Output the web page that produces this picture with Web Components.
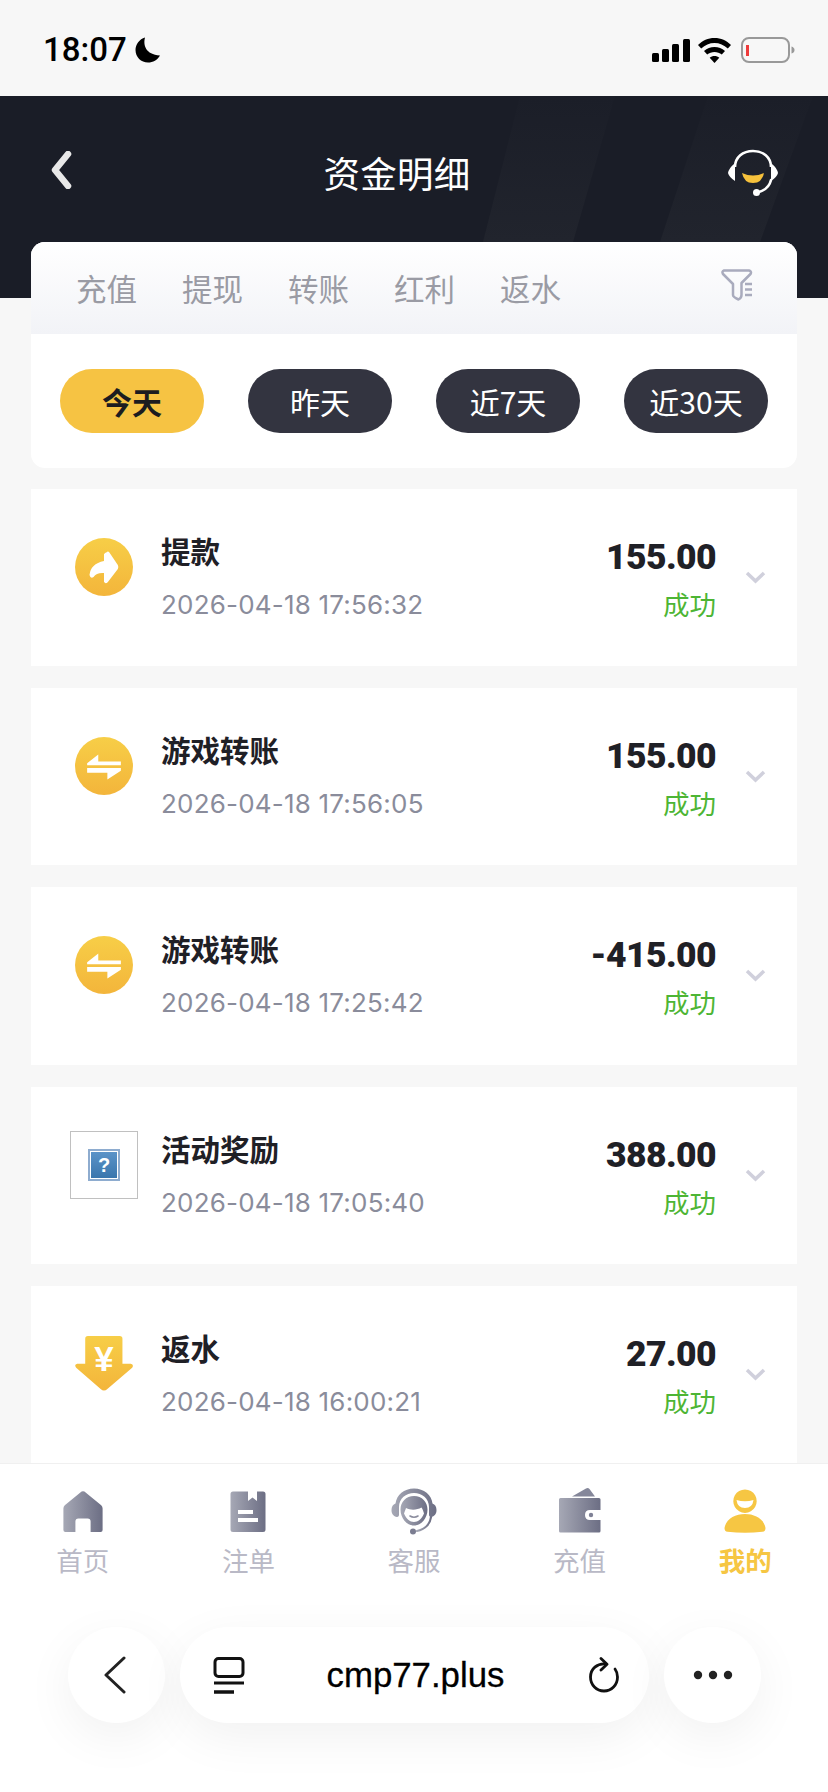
<!DOCTYPE html>
<html lang="zh-CN">
<head>
<meta charset="utf-8">
<title>资金明细</title>
<style>
    html, body {
        margin: 0;
        padding: 0;
        background: #f7f7f7;
    }
    body {
        width: 828px;
        height: 1792px;
        overflow: hidden;
        display: flex;
        flex-direction: column;
        font-family: "Noto Sans CJK SC", "Noto Sans", sans-serif;
    }
    .list {
        flex: 1;
        min-height: 0;
        overflow: hidden;
        display: flex;
        flex-direction: column;
        gap: 22px;
        padding: 20.67px 31px 0;
    }
</style>
</head>
<body>
    <ui-status-bar></ui-status-bar>
    <ui-page-header title="资金明细"></ui-page-header>
    <ui-filter-card>
        <ui-chip active>今天</ui-chip>
        <ui-chip>昨天</ui-chip>
        <ui-chip>近7天</ui-chip>
        <ui-chip>近30天</ui-chip>
    </ui-filter-card>
    <div class="list">
        <ui-record icon="withdraw" name="提款" time="2026-04-18 17:56:32" amount="155.00"></ui-record>
        <ui-record icon="transfer" name="游戏转账" time="2026-04-18 17:56:05" amount="155.00"></ui-record>
        <ui-record icon="transfer" name="游戏转账" time="2026-04-18 17:25:42" amount="-415.00"></ui-record>
        <ui-record icon="missing" name="活动奖励" time="2026-04-18 17:05:40" amount="388.00"></ui-record>
        <ui-record icon="rebate" name="返水" time="2026-04-18 16:00:21" amount="27.00"></ui-record>
    </div>
    <ui-bottom-area>
        <ui-nav-item icon="home">首页</ui-nav-item>
        <ui-nav-item icon="orders">注单</ui-nav-item>
        <ui-nav-item icon="service">客服</ui-nav-item>
        <ui-nav-item icon="wallet">充值</ui-nav-item>
        <ui-nav-item icon="me" active>我的</ui-nav-item>
    </ui-bottom-area>

<script>
(() => {

    const grayFill = `<defs><linearGradient id="g" x1="0" x2="1" y1="0" y2="0"><stop offset="0" stop-color="#a6a8b5"/><stop offset="1" stop-color="#6c6e84"/></linearGradient></defs>`;
    const yellowFill = `<defs><linearGradient id="y" x1="0" x2="0" y1="0" y2="1"><stop offset="0" stop-color="#f7ce47"/><stop offset="1" stop-color="#f3b53b"/></linearGradient></defs>`;

    const navIcons = {
        home: `<svg width="40" height="42" viewBox="0 0 40 42" style="margin-top:1px">${grayFill}
            <path fill="url(#g)" d="M18.6 .6Q20 -.2 21.4 .6L38.2 14.2Q39.6 15.4 39.6 17.4V39Q39.6 41 37.6 41H27.6V30.5Q27.6 27.5 24.6 27.5H15.4Q12.4 27.5 12.4 30.5V41H2.4Q.4 41 .4 39V17.4Q.4 15.4 1.8 14.2Z"/></svg>`,
        orders: `<svg width="36" height="42" viewBox="0 0 36 42" style="margin-top:1px">${grayFill}
            <path fill="url(#g)" fill-rule="evenodd" d="M3 .5H18V10L22.5 6.5L27 10V.5H33Q35.5 .5 35.5 3V38.5Q35.5 41 33 41H3Q.5 41 .5 38.5V3Q.5 .5 3 .5ZM8 19V23H23V19ZM8 27V31H28V27Z"/></svg>`,
        service: `<svg width="46" height="47" viewBox="0 0 46 47">${grayFill}
            <path fill="url(#g)" d="M23 .5C33 .5 40.5 7 41.5 15.5C44 16.5 45.5 18.5 45.5 22C45.5 26 43.5 28.5 40 29C38.5 29 38 28 38 26.5V19C38 10.5 31 5 23 5C15 5 8 10.5 8 19V26.5C8 28 7.5 29 6 29C2.5 28.5 .5 26 .5 22C.5 18.5 2 16.5 4.5 15.5C5.5 7 13 .5 23 .5Z"/>
            <path fill="url(#g)" fill-rule="evenodd" d="M23 8C31 8 36.5 14 36.5 21.5C36.5 30 30.5 37.5 23 37.5C15.5 37.5 9.5 30 9.5 21.5C9.5 14 15 8 23 8ZM15 20C14 23 13.5 24 13 25.5C15 30.5 19 34 23 34C27 34 31 30.5 33 25.5C32.5 23.5 31.5 21 30.5 19.5C26 22 20 22.5 15 20Z"/>
            <path fill="none" stroke="#8b8d9e" stroke-width="1.6" stroke-linecap="round" d="M19 28Q23 30.5 27 28"/>
            <path fill="none" stroke="url(#g)" stroke-width="2.2" stroke-linecap="round" d="M40 29C39 36 34 41.5 26 43"/>
            <circle cx="22" cy="43.5" r="3" fill="#7b7d91"/></svg>`,
        wallet: `<svg width="42" height="46" viewBox="0 0 42 46" style="margin-top:-2px">${grayFill}
            <path fill="#85879a" d="M13 9.5L27 1.5Q29 .5 30.5 2L36 9.5Z"/>
            <path fill="url(#g)" d="M1.5 11H40Q41.5 11 41.5 12.5V23H31Q26 23 26 28Q26 33 31 33H41.5V44Q41.5 45.5 40 45.5H1.5Q0 45.5 0 44V12.5Q0 11 1.5 11Z"/>
            <circle cx="32" cy="28" r="2.2" fill="#7f8196"/></svg>`,
        me: `<svg width="42" height="44" viewBox="0 0 42 44"><path fill="#f6c643" fill-rule="evenodd" d="M21 .5A11.7 11.7 0 1 1 20.99 .5ZM12.5 11Q13.5 19 21 19Q28.5 19 29.5 11Q21 13.5 12.5 11Z"/>
            <path fill="#f6c643" d="M21 25C31 25 40 30 41.5 39Q41.5 42.5 38.5 42.8Q21 44.5 3.5 42.8Q.5 42.5 .5 39C2 30 11 25 21 25Z"/></svg>`
    };

    const recordIcons = {
        withdraw: `<svg width="58" height="58" viewBox="0 0 172 172">${yellowFill}<circle cx="86" cy="86" r="86" fill="url(#y)"/>
            <path fill="#fff" d="M94 42Q98 38 102 43L127 80Q130 86 127 92L97 131Q90 138 86 130V104Q64 102 55 116Q46 122 43 110Q46 76 86 68V48Q88 44 94 42Z"/></svg>`,
        transfer: `<svg width="58" height="58" viewBox="0 0 172 172">${yellowFill}<circle cx="86" cy="86" r="86" fill="url(#y)"/>
            <path fill="#fff" d="M36 84V78L69 52V73H136V84ZM36 92H136V100L96 126V106H36Z"/></svg>`,
        rebate: `<svg width="58" height="55" viewBox="0 0 172 164">${yellowFill}
            <path fill="url(#y)" d="M38 0H133Q141 0 141 8V83H166Q176 85 170 95L96 158Q86 167 76 158L3 95Q-4 85 6 83H30V8Q30 0 38 0Z"/>
            <text x="86" y="104" text-anchor="middle" fill="#fff" font-family="Liberation Sans, sans-serif" font-weight="700" font-size="104">¥</text></svg>`
    };

    class StatusBar extends HTMLElement {
        constructor() {
            super();
            this.attachShadow({mode: 'open'});
            this.shadowRoot.innerHTML = `
                <style>
                    :host {
                        display: flex;
                        flex: none;
                        height: 96px;
                        align-items: flex-start;
                        justify-content: space-between;
                        background: #f7f7f7;
                        padding: 34px 33px 0 43px;
                        box-sizing: border-box;
                    }
                    .left, .right { display: flex; align-items: center; }
                    .left { gap: 8px; }
                    .right { gap: 8px; padding-top: 3px; }
                    .time {
                        font: 500 33px/32px Roboto, sans-serif;
                        color: #000;
                    }
                    svg { display: block; }
                </style>
                <div class="left">
                    <span class="time">18:07</span>
                    <svg width="26" height="26" viewBox="0 0 25 26"><path d="M9.5 .5C7.5 8 10 17.5 24.5 18.5C22 23 17.5 25.5 12.5 25.5C5.5 25.5 0 20 0 13C0 7.5 4 2 9.5 .5Z"/></svg>
                </div>
                <div class="right">
                    <svg width="38" height="23" viewBox="0 0 38 23"><rect x="0" y="14" width="7" height="9" rx="1.5"/><rect x="10" y="10" width="7" height="13" rx="1.5"/><rect x="20" y="5" width="7" height="18" rx="1.5"/><rect x="31" y="0" width="7" height="23" rx="1.5"/></svg>
                    <svg width="33" height="25" viewBox="0 0 33 25">
                        <path d="M16.5 0C23 0 28.5 2.5 33 7L29.8 10.5C26 7 21.5 5 16.5 5C11.5 5 7 7 3.2 10.5L0 7C4.5 2.5 10 0 16.5 0Z"/>
                        <path d="M16.5 9C20.5 9 24 10.5 27 13L23.8 16.5C21.8 15 19.2 14 16.5 14C13.8 14 11.2 15 9.2 16.5L6 13C9 10.5 12.5 9 16.5 9Z"/>
                        <path d="M16.5 18C18.3 18 20 18.6 21.3 19.7L16.5 25L11.7 19.7C13 18.6 14.7 18 16.5 18Z"/></svg>
                    <svg width="54" height="26" viewBox="0 0 54 26" style="margin-left:2px">
                        <rect x="1" y="1" width="47" height="24" rx="7" fill="none" stroke="#999" stroke-width="2"/>
                        <rect x="5" y="8" width="3" height="11" fill="#ee3b3b"/>
                        <path d="M50.5 9.5Q53.5 10.5 53.5 13Q53.5 15.5 50.5 16.5Z" fill="#999"/></svg>
                </div>
            `;
        }
    }

    class PageHeader extends HTMLElement {
        constructor() {
            super();
            this.attachShadow({mode: 'open'});
            this.shadowRoot.innerHTML = `
                <style>
                    :host {
                        display: block;
                        flex: none;
                        position: relative;
                        height: 202px;
                        background: #1a1d27;
                        overflow: hidden;
                    }
                    .stripes { position: absolute; left: 0; top: 0; }
                    .bar {
                        position: relative;
                        display: flex;
                        align-items: center;
                        justify-content: space-between;
                        height: 40px;
                        padding: 57px 50px 0 50px;
                    }
                    h1 {
                        margin: 0;
                        font: 400 36.5px/40px "Noto Sans CJK SC", sans-serif;
                        letter-spacing: .3px;
                        color: #fff;
                        flex: 1;
                        text-align: center;
                        padding-right: 6px;
                    }
                    svg.icon { display: block; flex: none; }
                </style>
                <svg class="stripes" width="828" height="202" viewBox="0 0 828 202">
                    <defs><linearGradient id="s" x1="0" x2="0" y1="0" y2="1"><stop offset="0" stop-color="#1b1e28"/><stop offset="1" stop-color="#21242d"/></linearGradient></defs>
                    <path fill="url(#s)" d="M520 0H615L573 146H483Z"/>
                    <path fill="url(#s)" d="M708 0H813L760 146H660Z"/>
                </svg>
                <div class="bar">
                    <svg class="icon" width="22" height="38" viewBox="0 0 22 38" style="margin-top:-6px"><path d="M18 3L5 19L18 35" fill="none" stroke="#e8e8e8" stroke-width="6.5" stroke-linecap="round" stroke-linejoin="round"/></svg>
                    <h1></h1>
                    <svg class="icon" width="50" height="47" viewBox="0 0 50 47" style="margin-top:-2px">
                        <path d="M7 18C7 8 15 2 25 2C35 2 43 8 43 18" fill="none" stroke="#fff" stroke-width="2.6"/>
                        <path d="M6 15Q1 19 0 24Q1 28 7 32V15ZM44 15Q49 19 50 24Q49 28 43 32V15Z" fill="#fff"/>
                        <path d="M43 31Q41 40 31 43" fill="none" stroke="#fff" stroke-width="2.6" stroke-linecap="round"/>
                        <circle cx="28.5" cy="43.5" r="3.5" fill="#fff"/>
                        <path d="M14 24Q25 29 36 24Q34 34 25 34Q16 34 14 24Z" fill="#f6c13c"/>
                    </svg>
                </div>
            `;
            this.shadowRoot.querySelector('h1').textContent = this.getAttribute('title');
        }
    }

    class Chip extends HTMLElement {
        constructor() {
            super();
            this.attachShadow({mode: 'open'});
            this.shadowRoot.innerHTML = `
                <style>
                    :host {
                        display: flex;
                        align-items: center;
                        justify-content: center;
                        width: 144px;
                        height: 64px;
                        border-radius: 32px;
                        background: #333440;
                        color: #fff;
                        font-size: 30px;
                        line-height: 40px;
                    }
                    :host([active]) {
                        background: #f6c343;
                        color: #1c1c20;
                        font-weight: 700;
                    }
                </style>
                <slot></slot>
            `;
        }
    }

    class FilterCard extends HTMLElement {
        constructor() {
            super();
            this.attachShadow({mode: 'open'});
            this.shadowRoot.innerHTML = `
                <style>
                    :host {
                        display: block;
                        flex: none;
                        margin: -56px 31px 0;
                        width: 766px;
                        height: 226px;
                        border-radius: 14px 14px 0 0;
                        background:
                            linear-gradient(#7f8087, #7f8087) left top / 14px 14px no-repeat,
                            linear-gradient(#7f8087, #7f8087) right top / 14px 14px no-repeat;
                        position: relative;
                    }
                    .inner {
                        height: 100%;
                        background: #fff;
                        border-radius: 14px;
                        overflow: hidden;
                    }
                    .tabs {
                        display: flex;
                        align-items: center;
                        height: 92px;
                        padding: 0 44px 0 45px;
                        background: linear-gradient(#fff, #f2f3f7);
                        box-sizing: border-box;
                        color: #9a9ba4;
                        font-size: 30.5px;
                        line-height: 40px;
                    }
                    .tabs span { margin-right: 45px; white-space: nowrap; }
                    .tabs svg { margin-left: auto; display: block; margin-top: -6px; }
                    .chips {
                        display: flex;
                        justify-content: space-between;
                        padding: 35px 29px 0;
                    }
                </style>
                <div class="inner">
                    <div class="tabs">
                        <span>充值</span><span>提现</span><span>转账</span><span>红利</span><span>返水</span>
                        <svg width="32" height="32" viewBox="0 0 32 32" fill="none" stroke="#a9abbd" stroke-width="2.5" stroke-linecap="round" stroke-linejoin="round">
                            <path d="M3 1.5H28Q31 2.5 29.5 5L20.5 14V26Q20.5 29 17.5 30.5Q12 28 12 26V15L2 5Q.5 2.5 3 1.5Z"/>
                            <path d="M24 15H31M24 20.5H31M24 26H31" stroke-linecap="butt"/>
                        </svg>
                    </div>
                    <div class="chips"><slot></slot></div>
                </div>
            `;
        }
    }

    class Record extends HTMLElement {
        constructor() {
            super();
            this.attachShadow({mode: 'open'});
            this.shadowRoot.innerHTML = `
                <style>
                    :host {
                        display: flex;
                        flex: none;
                        height: 177.33px;
                        background: #fff;
                        padding-left: 39px;
                        padding-right: 31px;
                        box-sizing: border-box;
                    }
                    .icon {
                        flex: none;
                        width: 68px;
                        height: 68px;
                        margin-top: 44px;
                        margin-right: 23px;
                        display: flex;
                        align-items: center;
                        justify-content: center;
                    }
                    .icon.missing {
                        border: 1px solid #c0c0c0;
                        box-sizing: border-box;
                    }
                    .broken {
                        width: 32px;
                        height: 32px;
                        box-sizing: border-box;
                        border: 2px solid #8eaccf;
                        padding: 1px;
                        background: #fff;
                    }
                    .broken b {
                        display: block;
                        height: 100%;
                        background: linear-gradient(#5b93c8, #3a76ad);
                        color: #fff;
                        font: 700 20px/26px "Liberation Sans", sans-serif;
                        text-align: center;
                    }
                    .text { flex: 1; min-width: 0; padding-top: 41px; }
                    .name {
                        font-size: 29.5px;
                        line-height: 40px;
                        font-weight: 700;
                        color: #1f2026;
                    }
                    .time {
                        margin-top: 17px;
                        font: 400 26px/36px Inter, sans-serif;
                        letter-spacing: .2px;
                        color: #8a8c9b;
                        white-space: nowrap;
                    }
                    .right { flex: none; text-align: right; padding-top: 46px; margin-right: -1px; }
                    .amount {
                        font: 900 35.5px/44px Roboto, sans-serif;
                        letter-spacing: -.6px;
                        color: #1f2026;
                    }
                    .status {
                        margin-top: 7px;
                        font-size: 26.5px;
                        line-height: 36px;
                        color: #4db534;
                    }
                    .chevron { flex: none; display: block; margin: 82px 0 0 30px; }
                </style>
                <div class="icon"></div>
                <div class="text">
                    <div class="name"></div>
                    <div class="time"></div>
                </div>
                <div class="right">
                    <div class="amount"></div>
                    <div class="status">成功</div>
                </div>
                <svg class="chevron" width="21" height="13" viewBox="0 0 21 13"><path d="M2 2L10.5 10L19 2" fill="none" stroke="#d0d0dc" stroke-width="3.5"/></svg>
            `;
        }

        connectedCallback() {
            const icon = this.getAttribute('icon');
            const box = this.shadowRoot.querySelector('.icon');
            if (icon === 'missing') {
                box.classList.add('missing');
                box.innerHTML = `<div class="broken"><b>?</b></div>`;
            } else {
                box.innerHTML = recordIcons[icon];
            }
            this.shadowRoot.querySelector('.name').textContent = this.getAttribute('name');
            this.shadowRoot.querySelector('.time').textContent = this.getAttribute('time');
            this.shadowRoot.querySelector('.amount').textContent = this.getAttribute('amount');
        }
    }

    class NavItem extends HTMLElement {
        constructor() {
            super();
            this.attachShadow({mode: 'open'});
            this.shadowRoot.innerHTML = `
                <style>
                    :host {
                        display: flex;
                        flex-direction: column;
                        align-items: center;
                        flex: 1;
                        color: #b9b9c6;
                        font-size: 26.5px;
                        line-height: 36px;
                    }
                    :host([active]) { color: #f6c643; font-weight: 700; }
                    .icon {
                        height: 46px;
                        display: flex;
                        align-items: center;
                        justify-content: center;
                        margin-bottom: 8px;
                    }
                    svg { display: block; }
                </style>
                <div class="icon"></div>
                <slot></slot>
            `;
        }

        connectedCallback() {
            this.shadowRoot.querySelector('.icon').innerHTML = navIcons[this.getAttribute('icon')];
        }
    }

    class BottomArea extends HTMLElement {
        constructor() {
            super();
            this.attachShadow({mode: 'open'});
            this.shadowRoot.innerHTML = `
                <style>
                    :host {
                        display: block;
                        flex: none;
                        height: 329px;
                        box-sizing: border-box;
                        background: #fff;
                        border-top: 1px solid #f0f0f0;
                        position: relative;
                        overflow: hidden;
                    }
                    nav {
                        display: flex;
                        padding-top: 24px;
                    }
                    .browser {
                        display: flex;
                        gap: 15px;
                        margin-top: 49px;
                        padding-left: 68px;
                    }
                    .round, .pill {
                        height: 96px;
                        background: #fff;
                        box-shadow: 0 14px 50px rgba(0, 0, 0, .06);
                        display: flex;
                        align-items: center;
                        box-sizing: border-box;
                    }
                    .round {
                        width: 97px;
                        border-radius: 48px;
                        justify-content: center;
                    }
                    .pill {
                        width: 469px;
                        border-radius: 48px;
                        justify-content: space-between;
                        padding: 0 29px 0 33px;
                    }
                    .back svg { margin-left: -4px; }
                    .url {
                        font: 400 34.8px/40px "Liberation Sans", sans-serif;
                        color: #000;
                        -webkit-text-stroke: .3px #000;
                        margin-right: 2px;
                    }
                    svg { display: block; }
                </style>
                <nav><slot></slot></nav>
                <div class="browser">
                    <div class="round back">
                        <svg width="24" height="38" viewBox="0 0 24 38"><path d="M21 2L3 19L21 36" fill="none" stroke="#222" stroke-width="3" stroke-linecap="round" stroke-linejoin="round"/></svg>
                    </div>
                    <div class="pill">
                        <svg width="32" height="37" viewBox="0 0 32 37" fill="none" stroke="#111" stroke-width="3"><rect x="2" y="1.5" width="28" height="18" rx="3.5"/><path d="M1 26H31"/><path d="M1 35H21" stroke-width="3.5"/></svg>
                        <span class="url">cmp77.plus</span>
                        <svg width="32" height="36" viewBox="0 0 32 36" fill="none" stroke="#111" stroke-width="2.8" stroke-linecap="round" stroke-linejoin="round"><path d="M18 7C9 6 2.5 12 2.5 20C2.5 28 8.5 34 16 34C23.5 34 29.5 28 29.5 20C29.5 17 28.5 14 27 12"/><path d="M13 1.5L19 7.2L13 13"/></svg>
                    </div>
                    <div class="round">
                        <svg width="40" height="10" viewBox="0 0 40 10" fill="#222"><circle cx="5" cy="5" r="4.2"/><circle cx="20" cy="5" r="4.2"/><circle cx="35" cy="5" r="4.2"/></svg>
                    </div>
                </div>
            `;
        }
    }

    window.customElements.define('ui-status-bar', StatusBar);
    window.customElements.define('ui-page-header', PageHeader);
    window.customElements.define('ui-chip', Chip);
    window.customElements.define('ui-filter-card', FilterCard);
    window.customElements.define('ui-record', Record);
    window.customElements.define('ui-nav-item', NavItem);
    window.customElements.define('ui-bottom-area', BottomArea);

})();
</script>
</body>
</html>
